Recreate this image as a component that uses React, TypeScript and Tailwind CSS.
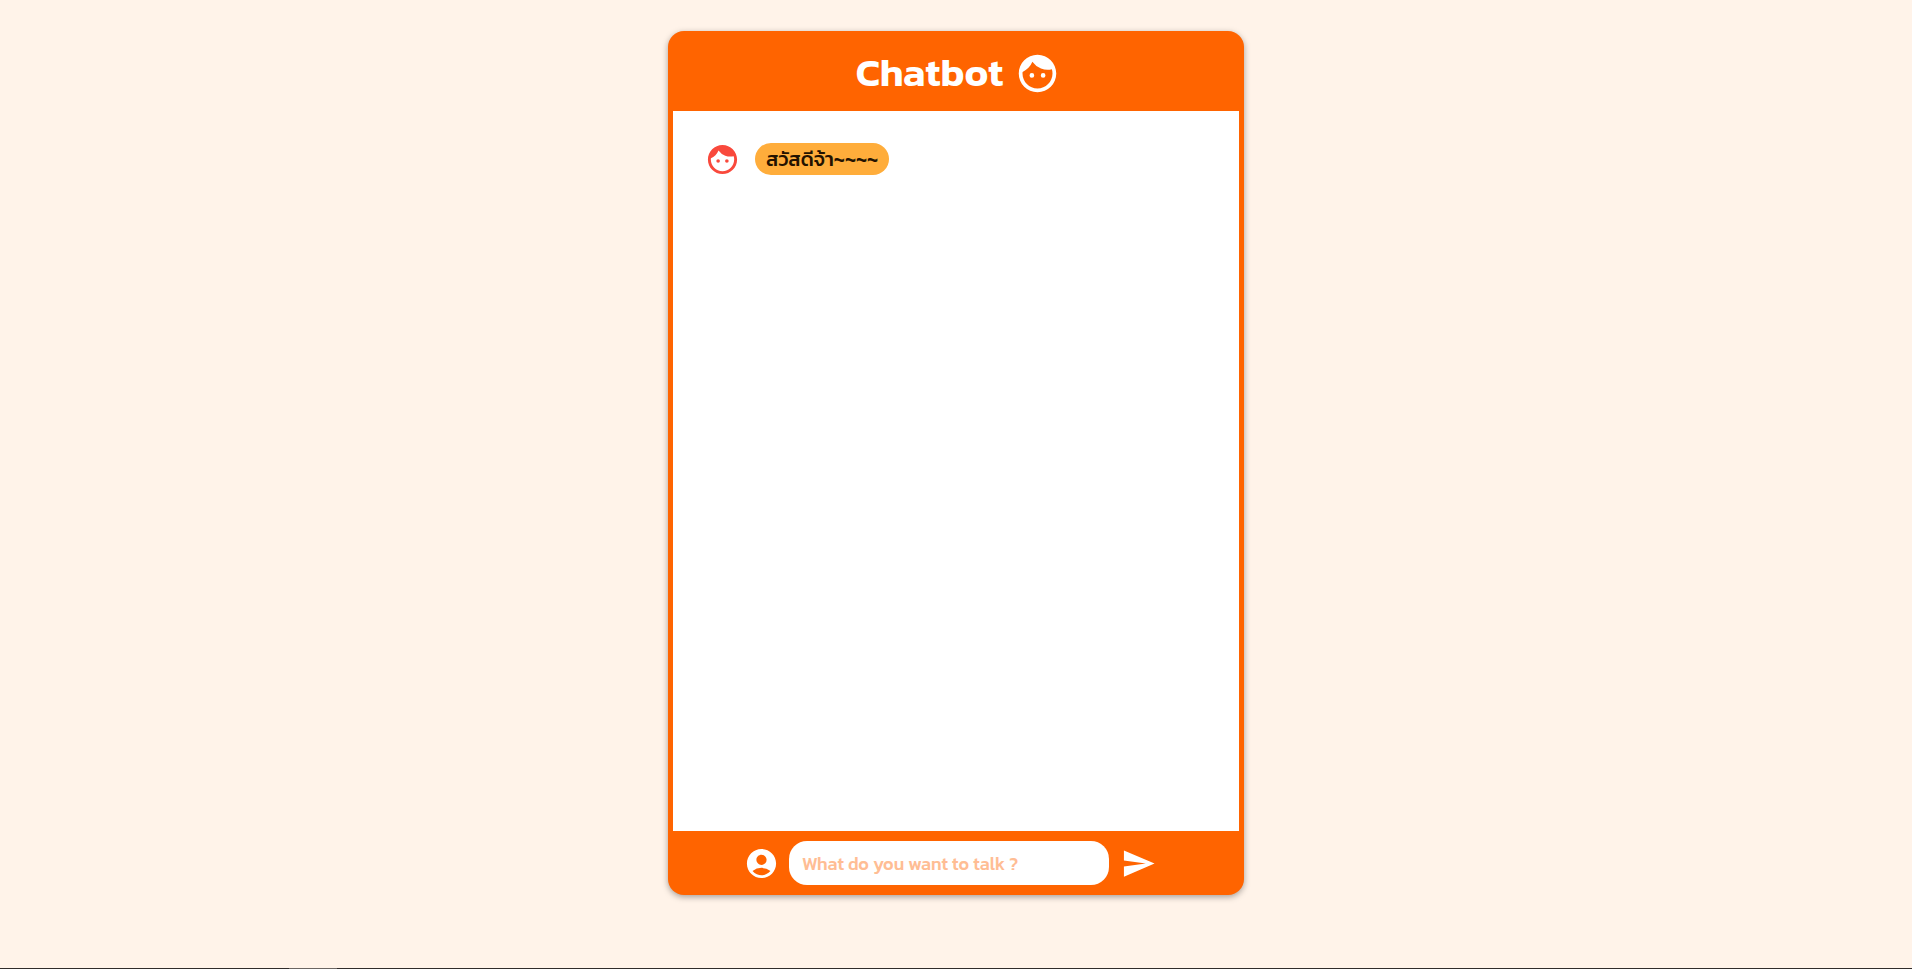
import { useState } from "react";
import type { FormEvent } from "react";
import { MdAccountCircle, MdFace, MdSend } from "react-icons/md";

type Message = { id: number; text: string; fromBot: boolean };

const greeting: Message = { id: 0, text: "สวัสดีจ้า~~~~", fromBot: true };

function ChatMessage({ message }: { message: Message }) {
  return (
    <li className={message.fromBot ? "flex items-start gap-[15px]" : "flex flex-row-reverse items-start gap-[15px]"}>
      {message.fromBot ? (
        <MdFace size={35} className="shrink-0 text-[#f9493c]" />
      ) : (
        <MdAccountCircle size={35} className="shrink-0 text-[#ff6400]" />
      )}
      <p className="mt-px h-8 whitespace-nowrap rounded-full bg-[#ffad3b] px-[11px] text-[20px] font-medium leading-8 text-[#241200]">
        {message.text}
      </p>
    </li>
  );
}

export default function App() {
  const [messages, setMessages] = useState<Message[]>([greeting]);
  const [draft, setDraft] = useState("");

  const send = (event: FormEvent) => {
    event.preventDefault();
    const text = draft.trim();
    if (!text) return;
    setMessages((current) => [...current, { id: current.length, text, fromBot: false }]);
    setDraft("");
  };

  return (
    <div className="flex min-h-screen flex-col bg-[#fff3e9] font-['Kanit','Noto_Sans','Noto_Sans_Thai',sans-serif]">
      <main className="flex grow items-start justify-center pt-[31px]">
        <section className="flex w-full max-w-xl flex-col overflow-hidden rounded-2xl bg-[#ff6400] shadow-[0_2px_6px_rgba(0,0,0,0.35)]">
          <header className="flex h-20 items-center justify-center gap-3 pl-1 pt-1 text-white">
            <h1 className="pb-0.5 text-[40px] font-semibold leading-none">Chatbot</h1>
            <MdFace size={45} />
          </header>
          <ul className="mx-[5px] flex h-[720px] flex-col gap-4 overflow-y-auto bg-white px-8 py-[31px]">
            {messages.map((message) => (
              <ChatMessage key={message.id} message={message} />
            ))}
          </ul>
          <form onSubmit={send} className="flex h-16 items-center justify-center gap-[10px] pr-3 text-white">
            <MdAccountCircle size={35} />
            <input
              type="text"
              aria-label="Message"
              placeholder="What do you want to talk ?"
              value={draft}
              onChange={(event) => setDraft(event.target.value)}
              className="h-11 w-80 rounded-[18px] bg-white px-[13px] text-[18px] font-medium text-[#ff6400] outline-none placeholder:text-[#ffbd94]"
            />
            <button type="submit" aria-label="Send" className="ml-0.5">
              <MdSend size={35} />
            </button>
          </form>
        </section>
      </main>
      <div className="flex h-px bg-[#302c2b]">
        <span className="ml-[289px] w-12 bg-[#6b6562]" />
      </div>
    </div>
  );
}
